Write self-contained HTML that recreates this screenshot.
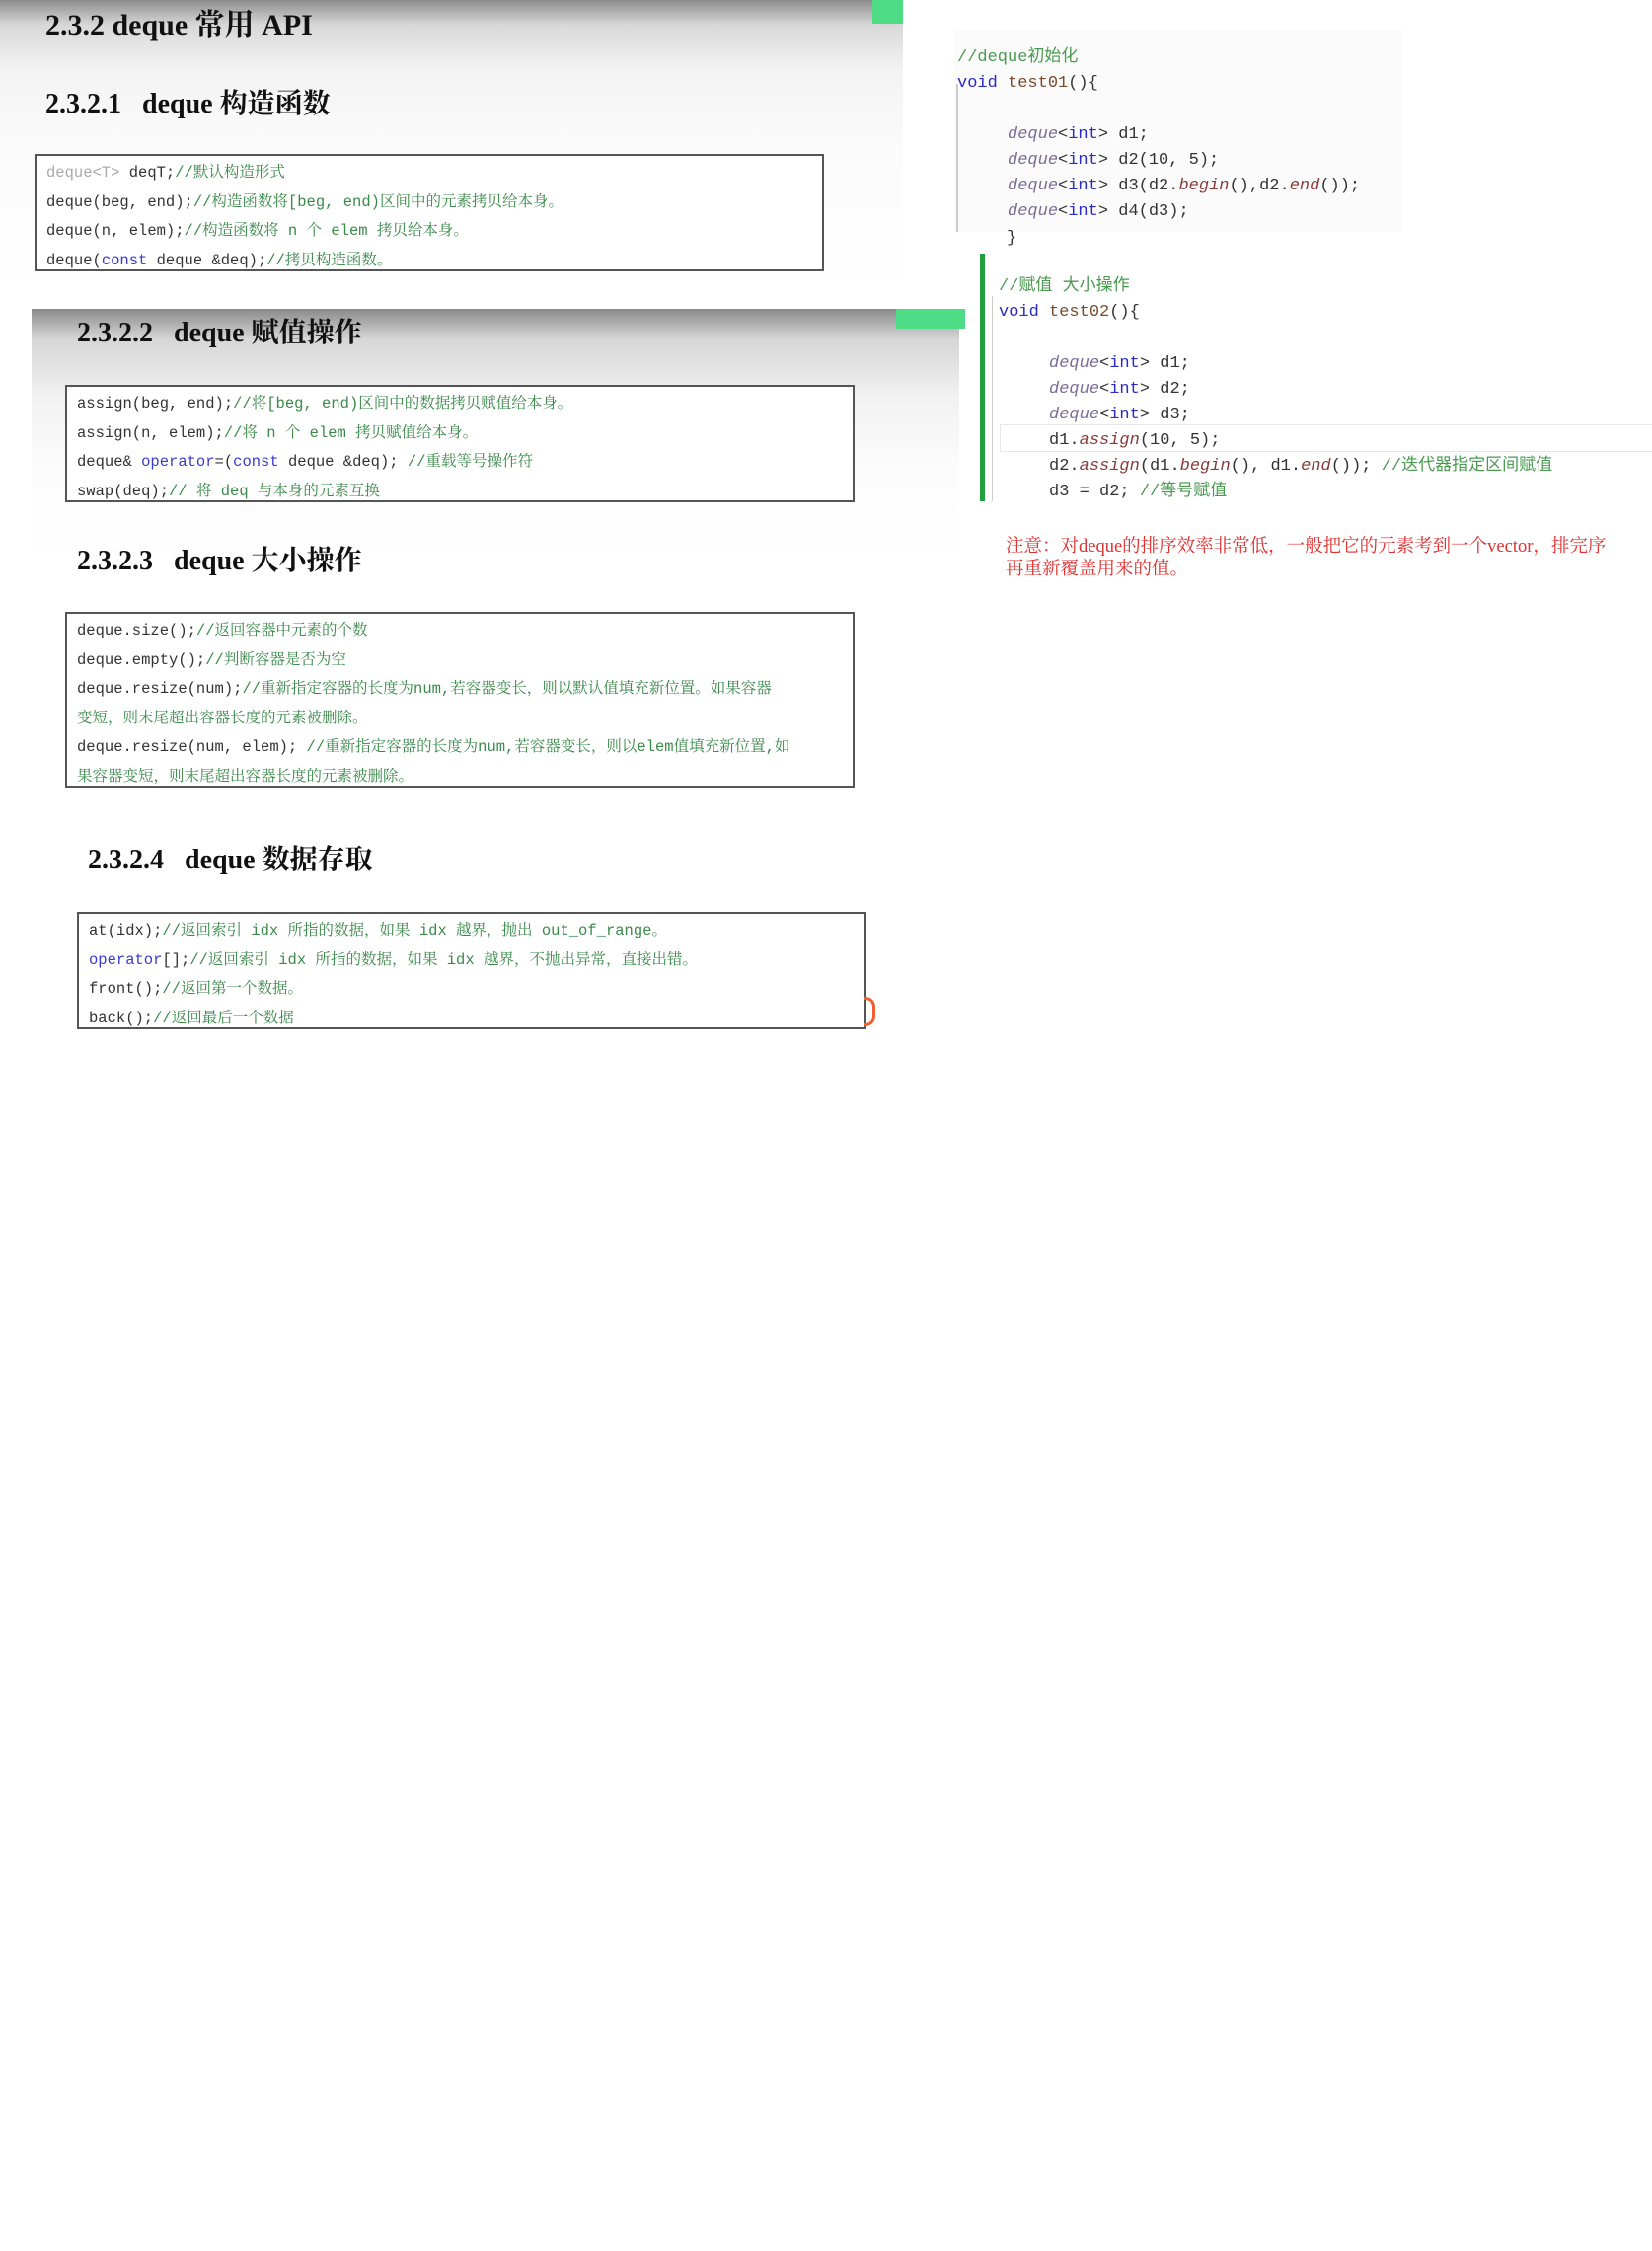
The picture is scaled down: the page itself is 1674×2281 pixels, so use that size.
<!DOCTYPE html>
<html><head><meta charset="utf-8"><style>
body{margin:0;width:1674px;height:2281px;background:#fff;position:relative;overflow:hidden;font-family:"Liberation Serif","Noto Serif CJK SC",serif}
.a{position:absolute}
.p1{left:0;top:0;width:915px;height:300px;background:linear-gradient(#8d8d8d 0px,#d8d8d8 25px,#f3f3f3 70px,#fbfbfb 150px,#fff 300px)}
.p2{left:32px;top:313px;width:940px;height:745px;background:linear-gradient(#8a8a8a 0px,#d6d6d6 30px,#f2f2f2 90px,#fcfcfc 160px,#fff 260px)}
h{position:absolute;font-weight:bold;color:#111;font-size:28px;white-space:nowrap;letter-spacing:0px}
.box{position:absolute;border:2px solid #555;background:#fff;box-sizing:border-box;padding:3px 10px;font-family:"Liberation Mono","Noto Serif CJK SC",monospace;font-size:15.5px;line-height:29.5px;color:#333;white-space:nowrap}
.g{color:#3a8a4a}.b{color:#3a3ad0}.l{color:#aaa}
.code{position:absolute;font-family:"Liberation Mono","Noto Sans CJK SC",monospace;font-size:17px;line-height:26px;white-space:pre;color:#333}
.c{color:#4a9a50}.k{color:#2a2ac8}.t{color:#7a6c98;font-style:italic}.f{color:#8a3a3a;font-style:italic}.fn{color:#7a4a2a}
</style></head><body>
<div class="a p1"></div>
<div class="a" style="left:884px;top:0;width:31px;height:24px;background:#4fdc86"></div>
<h style="left:46px;top:0px;font-size:30px">2.3.2 deque 常用 API</h>
<h style="left:46px;top:83px">2.3.2.1&nbsp;&nbsp;&nbsp;deque 构造函数</h>
<div class="box" style="left:35px;top:156px;width:800px;height:119px">
<div><span class="l">deque&lt;T&gt;</span> deqT;<span class="g">//默认构造形式</span></div>
<div>deque(beg, end);<span class="g">//构造函数将[beg, end)区间中的元素拷贝给本身。</span></div>
<div>deque(n, elem);<span class="g">//构造函数将 n 个 elem 拷贝给本身。</span></div>
<div>deque(<span class="b">const</span> deque &amp;deq);<span class="g">//拷贝构造函数。</span></div>
</div>
<div class="a p2"></div>
<div class="a" style="left:908px;top:313px;width:70px;height:20px;background:#4fdc86"></div>
<h style="left:78px;top:315px">2.3.2.2&nbsp;&nbsp;&nbsp;deque 赋值操作</h>
<div class="box" style="left:66px;top:390px;width:800px;height:119px">
<div>assign(beg, end);<span class="g">//将[beg, end)区间中的数据拷贝赋值给本身。</span></div>
<div>assign(n, elem);<span class="g">//将 n 个 elem 拷贝赋值给本身。</span></div>
<div>deque&amp; <span class="b">operator</span>=(<span class="b">const</span> deque &amp;deq); <span class="g">//重载等号操作符</span></div>
<div>swap(deq);<span class="g">// 将 deq 与本身的元素互换</span></div>
</div>
<h style="left:78px;top:546px">2.3.2.3&nbsp;&nbsp;&nbsp;deque 大小操作</h>
<div class="box" style="left:66px;top:620px;width:800px;height:178px">
<div>deque.size();<span class="g">//返回容器中元素的个数</span></div>
<div>deque.empty();<span class="g">//判断容器是否为空</span></div>
<div>deque.resize(num);<span class="g">//重新指定容器的长度为num,若容器变长，则以默认值填充新位置。如果容器</span></div>
<div><span class="g">变短，则末尾超出容器长度的元素被删除。</span></div>
<div>deque.resize(num, elem); <span class="g">//重新指定容器的长度为num,若容器变长，则以elem值填充新位置,如</span></div>
<div><span class="g">果容器变短，则末尾超出容器长度的元素被删除。</span></div>
</div>
<h style="left:89px;top:849px">2.3.2.4&nbsp;&nbsp;&nbsp;deque 数据存取</h>
<div class="box" style="left:78px;top:924px;width:800px;height:119px">
<div>at(idx);<span class="g">//返回索引 idx 所指的数据，如果 idx 越界，抛出 out_of_range。</span></div>
<div><span class="b">operator</span>[];<span class="g">//返回索引 idx 所指的数据，如果 idx 越界，不抛出异常，直接出错。</span></div>
<div>front();<span class="g">//返回第一个数据。</span></div>
<div>back();<span class="g">//返回最后一个数据</span></div>
</div>
<div class="a" style="left:876px;top:1010px;width:8px;height:24px;border:3px solid #f06030;border-left:none;border-radius:0 10px 10px 0"></div>

<div class="a" style="left:967px;top:30px;width:455px;height:205px;background:#fbfbfb"></div>
<div class="a" style="left:969px;top:85px;width:2px;height:150px;background:#ccc"></div>
<div class="code" style="left:970px;top:46px"><span class="c">//deque初始化</span>
<span class="k">void</span> <span class="fn">test01</span>(){

     <span class="t">deque</span>&lt;<span class="k">int</span>&gt; d1;
     <span class="t">deque</span>&lt;<span class="k">int</span>&gt; d2(10, 5);
     <span class="t">deque</span>&lt;<span class="k">int</span>&gt; d3(d2.<span class="f">begin</span>(),d2.<span class="f">end</span>());
     <span class="t">deque</span>&lt;<span class="k">int</span>&gt; d4(d3);</div>
<div class="code" style="left:1020px;top:229px">}</div>
<div class="a" style="left:993px;top:257px;width:5px;height:251px;background:#22a040"></div>
<div class="a" style="left:1005px;top:300px;width:1px;height:208px;background:#ccc"></div>
<div class="a" style="left:1013px;top:430px;width:661px;height:26px;border:1px solid #e6e6e6;border-right:none"></div>
<div class="code" style="left:1012px;top:278px"><span class="c">//赋值 大小操作</span>
<span class="k">void</span> <span class="fn">test02</span>(){

     <span class="t">deque</span>&lt;<span class="k">int</span>&gt; d1;
     <span class="t">deque</span>&lt;<span class="k">int</span>&gt; d2;
     <span class="t">deque</span>&lt;<span class="k">int</span>&gt; d3;
     d1.<span class="f">assign</span>(10, 5);
     d2.<span class="f">assign</span>(d1.<span class="f">begin</span>(), d1.<span class="f">end</span>()); <span class="c">//迭代器指定区间赋值</span>
     d3 = d2; <span class="c">//等号赋值</span></div>
<div class="a" style="left:1019px;top:543px;font-size:18.5px;line-height:23px;color:#e03030;white-space:nowrap">注意：对deque的排序效率非常低，一般把它的元素考到一个vector，排完序<br>再重新覆盖用来的值。</div>
</body></html>
